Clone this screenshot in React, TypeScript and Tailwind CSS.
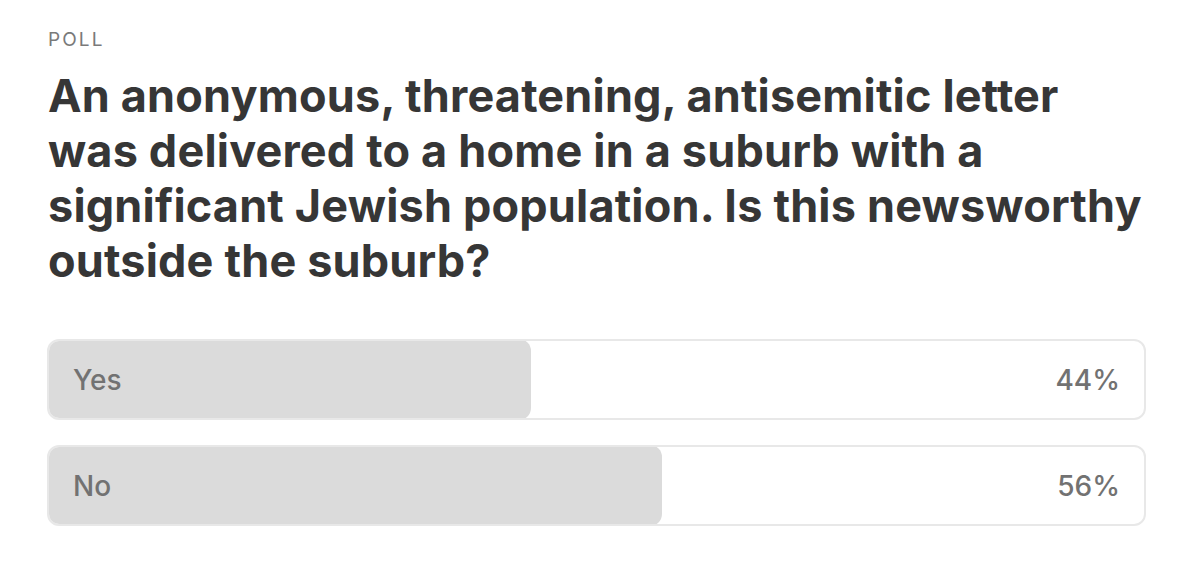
export default function App() {
  const options = [
    { label: "Yes", pct: 44 },
    { label: "No", pct: 56 },
  ];
  return (
    <div
      className="w-[1190px] h-[576px] bg-white pl-[48px] pr-[44px] pt-[29px]"
      style={{ fontFamily: "Inter, 'Noto Sans', sans-serif" }}
    >
      <div className="text-[19px] leading-[22px] text-[#7a7a7a] tracking-[0.11em]">POLL</div>
      <h1 className="mt-[17px] text-[45px] leading-[55px] font-bold text-[#363636] tracking-[0.004em] whitespace-nowrap">
        An anonymous, threatening, antisemitic letter
        <br />
        was delivered to a home in a suburb with a
        <br />
        significant Jewish population. Is this newsworthy
        <br />
        outside the suburb?
      </h1>
      <div className="mt-[51px] flex flex-col gap-[25px] -ml-px">
        {options.map((o) => (
          <div
            key={o.label}
            className="relative h-[81px] rounded-[12px] border-2 border-[#e8e8e8] bg-white overflow-hidden"
          >
            <div
              className="absolute left-[-2px] top-[-2px] bottom-[-2px] bg-[#dbdbdb] rounded-[12px]"
              style={{ width: `calc(${o.pct}% + 2px)` }}
            />
            <div className="relative flex h-full items-center justify-between pl-[24px] pr-[24px] text-[28px] font-medium text-[#727272]">
              <span>{o.label}</span>
              <span>{o.pct}%</span>
            </div>
          </div>
        ))}
      </div>
    </div>
  );
}
